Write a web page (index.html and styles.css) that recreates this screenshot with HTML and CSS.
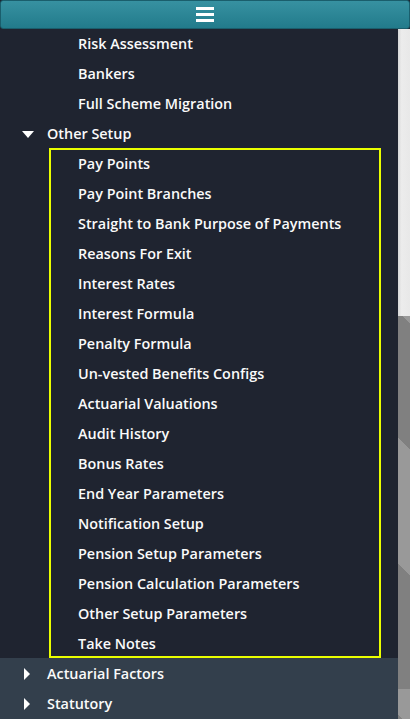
FILE: index.html
```html
<!DOCTYPE html>
<html>
<head>
<meta charset="utf-8">
<link rel="stylesheet" href="styles.css">
</head>
<body>
<header class="topbar">
  <svg class="burger" width="18" height="15" viewBox="0 0 18 15"><rect x="0" y="0" width="18" height="3" fill="#fff"/><rect x="0" y="6" width="18" height="3" fill="#fff"/><rect x="0" y="12" width="18" height="3" fill="#fff"/></svg>
</header>
<div class="main">
  <nav class="menu">
    <div class="item sub">Risk Assessment</div>
    <div class="item sub">Bankers</div>
    <div class="item sub">Full Scheme Migration</div>
    <div class="item top"><span class="caret down"></span>Other Setup</div>
    <div class="group">
      <div class="item gsub">Pay Points</div>
      <div class="item gsub">Pay Point Branches</div>
      <div class="item gsub">Straight to Bank Purpose of Payments</div>
      <div class="item gsub">Reasons For Exit</div>
      <div class="item gsub">Interest Rates</div>
      <div class="item gsub">Interest Formula</div>
      <div class="item gsub">Penalty Formula</div>
      <div class="item gsub">Un-vested Benefits Configs</div>
      <div class="item gsub">Actuarial Valuations</div>
      <div class="item gsub">Audit History</div>
      <div class="item gsub">Bonus Rates</div>
      <div class="item gsub">End Year Parameters</div>
      <div class="item gsub">Notification Setup</div>
      <div class="item gsub">Pension Setup Parameters</div>
      <div class="item gsub">Pension Calculation Parameters</div>
      <div class="item gsub">Other Setup Parameters</div>
      <div class="item gsub">Take Notes</div>
    </div>
    <div class="collapsed">
      <div class="item top"><span class="caret right"></span>Actuarial Factors</div>
      <div class="item top"><span class="caret right"></span>Statutory</div>
    </div>
  </nav>
  <div class="strip">
    <div class="track"></div>
    <div class="stripes"></div>
  </div>
</div>
</body>
</html>
```
FILE: styles.css
```css
html, body {
  margin: 0;
  padding: 0;
  height: 100%;
  overflow: hidden;
  background: #1f2430;
}
body {
  font-family: "Open Sans", "Noto Sans", sans-serif;
  font-weight: 600;
  font-size: 14.4px;
  color: #fafafa;
}
.topbar {
  box-sizing: border-box;
  height: 29px;
  background: linear-gradient(#3791a1, #227b8b);
  border: 1px solid #1a5e6c;
  border-radius: 3px;
  display: flex;
  align-items: center;
  justify-content: center;
}
.burger { display: block; margin-top: -1px; }
.main {
  display: flex;
  height: 690px;
}
.menu {
  flex: 1;
  display: flex;
  flex-direction: column;
  background: #1f2430;
}
.item {
  height: 30px;
  line-height: 30px;
  white-space: nowrap;
  display: flex;
  align-items: center;
}
.sub { padding-left: 78px; }
.top { padding-left: 22px; }
.caret {
  width: 0;
  height: 0;
  display: inline-block;
}
.caret.down {
  border-left: 6px solid transparent;
  border-right: 6px solid transparent;
  border-top: 7px solid #fff;
  margin-right: 13px;
}
.caret.right {
  border-top: 6px solid transparent;
  border-bottom: 6px solid transparent;
  border-left: 6px solid #fff;
  margin-left: 2px;
  margin-right: 17px;
}
.group {
  box-sizing: border-box;
  margin-left: 49px;
  width: 332px;
  height: 510px;
  margin-top: -1px;
  border: 2px solid #eaff00;
  overflow: visible;
}
.gsub { padding-left: 27px; }
.gsub:first-child { margin-top: -1px; }
.collapsed {
  flex: 1;
  padding-top: 1px;
  background: #333f4c;
}
.strip {
  width: 12px;
  display: flex;
  flex-direction: column;
}
.track {
  height: 287px;
  background: linear-gradient(90deg, #d8d8d8, #ececec 30%, #e8e8e8);
}
.stripes {
  flex: 1;
  background: repeating-linear-gradient(45deg, #808080 0, #808080 89px, #999999 89px, #999999 178px);
  background-position: 0 -30px;
}
```
